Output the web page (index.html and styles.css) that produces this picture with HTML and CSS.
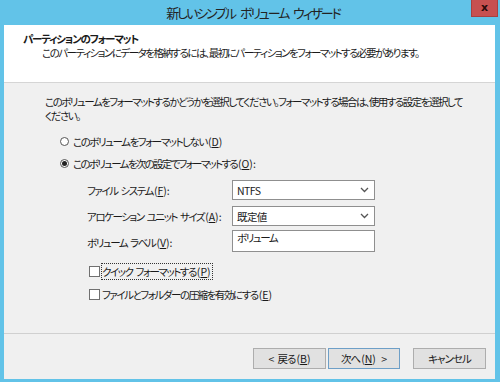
FILE: index.html
```html
<!DOCTYPE html>
<html lang="ja">
<head>
<meta charset="utf-8">
<link rel="stylesheet" href="styles.css">
</head>
<body>
<div class="window">
  <div class="titlebar">
    <div class="tb-side"></div>
    <div class="tb-title">新しいシンプル ボリューム ウィザード</div>
    <div class="tb-side tb-right"><div class="close">x</div></div>
  </div>
  <div class="client">
    <div class="header">
      <div class="h-title">パーティションのフォーマット</div>
      <div class="h-sub">このパーティションにデータを格納するには、最初にパーティションをフォーマットする必要があります。</div>
    </div>
    <div class="body">
      <p class="intro">このボリュームをフォーマットするかどうかを選択してください。フォーマットする場合は、使用する設定を選択して<br>ください。</p>
      <div class="opt opt1"><span class="radio"></span><span>このボリュームをフォーマットしない<span class="ak">(<u>D</u>)</span></span></div>
      <div class="opt opt2"><span class="radio checked"></span><span class="tight">このボリュームを次の設定でフォーマットする<span class="ak">(<u>O</u>):</span></span></div>
      <div class="field f1"><span class="lbl">ファイル システム<span class="ak">(<u>F</u>):</span></span><div class="select"><span>NTFS</span><svg width="9" height="6" viewBox="0 0 9 6"><path d="M1 1 L4.5 4.5 L8 1" fill="none" stroke="#555" stroke-width="1.3"/></svg></div></div>
      <div class="field f2"><span class="lbl">アロケーション ユニット サイズ<span class="ak">(<u>A</u>):</span></span><div class="select"><span>既定値</span><svg width="9" height="6" viewBox="0 0 9 6"><path d="M1 1 L4.5 4.5 L8 1" fill="none" stroke="#555" stroke-width="1.3"/></svg></div></div>
      <div class="field f3"><span class="lbl">ボリューム ラベル<span class="ak">(<u>V</u>):</span></span><div class="textbox">ボリューム</div></div>
      <div class="chk chk1"><span class="box"></span><span class="focus">クイック フォーマットする<span class="ak">(<u>P</u>)</span></span></div>
      <div class="chk chk2"><span class="box"></span><span>ファイルとフォルダーの圧縮を有効にする<span class="ak">(<u>E</u>)</span></span></div>
    </div>
    <div class="footer">
      <button class="btn">&lt; 戻る<span class="ak">(<u>B</u>)</span></button>
      <button class="btn btn-default">次へ<span class="ak">(<u>N</u>) &gt;</span></button>
      <button class="btn btn-cancel">キャンセル</button>
    </div>
  </div>
</div>
</body>
</html>
```
FILE: styles.css
```css
* { box-sizing: border-box; }
html, body { margin: 0; padding: 0; }
body {
  width: 500px;
  height: 382px;
  font-family: "Noto Sans CJK JP", "Noto Sans", sans-serif;
  font-size: 10.5px;
  font-feature-settings: "palt";
  color: #1a1a1a;
  overflow: hidden;
  letter-spacing: -1.45px;
  word-spacing: 2px;
}
u { text-decoration: underline; text-underline-offset: 1px; }
.ak { letter-spacing: 0; padding-left: 1px; }
.tight { letter-spacing: -1.7px; }
.window {
  width: 500px;
  height: 382px;
  background: #62c3e8;
  display: flex;
  flex-direction: column;
  padding: 0 5px 3px 4px;
}
.titlebar {
  height: 25px;
  display: grid;
  grid-template-columns: 1fr auto 1fr;
  align-items: start;
  margin-right: -3px;
}
.tb-title {
  font-size: 13px;
  line-height: 25px;
  color: #222;
  letter-spacing: -2.1px;
  word-spacing: 4px;
  padding-left: 4px;
}
.tb-right { display: flex; justify-content: flex-end; }
.close {
  width: 27px;
  height: 17px;
  background: #c75050;
  border: 1px solid #a84040;
  border-top: none;
  color: #2a0a0a;
  font-family: "DejaVu Sans", sans-serif;
  font-weight: bold;
  font-size: 11px;
  letter-spacing: 0;
  line-height: 15px;
  text-align: center;
}
.client {
  flex: 1;
  background: #f0f0f0;
  display: flex;
  flex-direction: column;
}
.header {
  height: 58px;
  background: #fff;
  border-bottom: 1px solid #d5d5d5;
  padding: 7px 0 0 19px;
}
.h-title { font-weight: bold; line-height: 14px; letter-spacing: -1.2px; }
.h-sub { line-height: 14px; padding-left: 19px; white-space: nowrap; letter-spacing: -1.5px; }
.body {
  flex: 1;
  padding-left: 41px;
  display: flex;
  flex-direction: column;
}
.intro { margin: 12px 0 0; line-height: 14px; white-space: nowrap; letter-spacing: -1.5px; }
.opt {
  display: flex;
  align-items: center;
  height: 16px;
  margin-left: 15px;
  gap: 4px;
}
.opt1 { margin-top: 10px; }
.opt2 { margin-top: 6px; }
.radio {
  width: 9px;
  height: 9px;
  border: 1px solid #555;
  border-radius: 50%;
  background: #fff;
  display: flex;
  align-items: center;
  justify-content: center;
}
.radio.checked::after {
  content: "";
  width: 5px;
  height: 5px;
  border-radius: 50%;
  background: #222;
}
.field {
  display: flex;
  align-items: center;
  margin-left: 42px;
}
.f1 { margin-top: 9px; }
.f2 { margin-top: 6px; }
.f3 { margin-top: 4px; align-items: flex-start; }
.lbl { width: 145px; }
.f3 .lbl { padding-top: 5px; }
.select {
  width: 143px;
  height: 20px;
  background: #fff;
  border: 1px solid #8f8f8f;
  display: flex;
  align-items: center;
  justify-content: space-between;
  padding: 0 5px 0 4px;
  letter-spacing: -0.6px;
}
.textbox {
  width: 143px;
  height: 22px;
  background: #fff;
  border: 1px solid #8f8f8f;
  padding: 0 0 0 4px;
  line-height: 14px;
}
.chk {
  display: flex;
  align-items: center;
  height: 16px;
  margin-left: 44px;
  gap: 2px;
}
.chk1 { margin-top: 11px; }
.chk2 { margin-top: 7px; }
.box {
  width: 11px;
  height: 11px;
  border: 1px solid #707070;
  background: #fff;
}
.focus { outline: 1px dotted #333; outline-offset: 0; padding-right: 1px; }
.footer {
  height: 46px;
  border-top: 1px solid #d0d0d0;
  display: flex;
  justify-content: flex-end;
  align-items: flex-start;
  padding: 14px 9px 0 0;
  gap: 2px;
}
.btn {
  width: 73px;
  height: 21px;
  background: #e1e1e1;
  border: 1px solid #adadad;
  font-family: inherit;
  font-size: 10.5px;
  font-feature-settings: "palt";
  letter-spacing: -1px;
  word-spacing: 3px;
  color: #1a1a1a;
  padding: 0;
  margin: 0;
  line-height: 18px;
}
.btn-default { border-color: #6e9fc7; width: 72px; }
.btn-cancel { margin-left: 11px; }
```
